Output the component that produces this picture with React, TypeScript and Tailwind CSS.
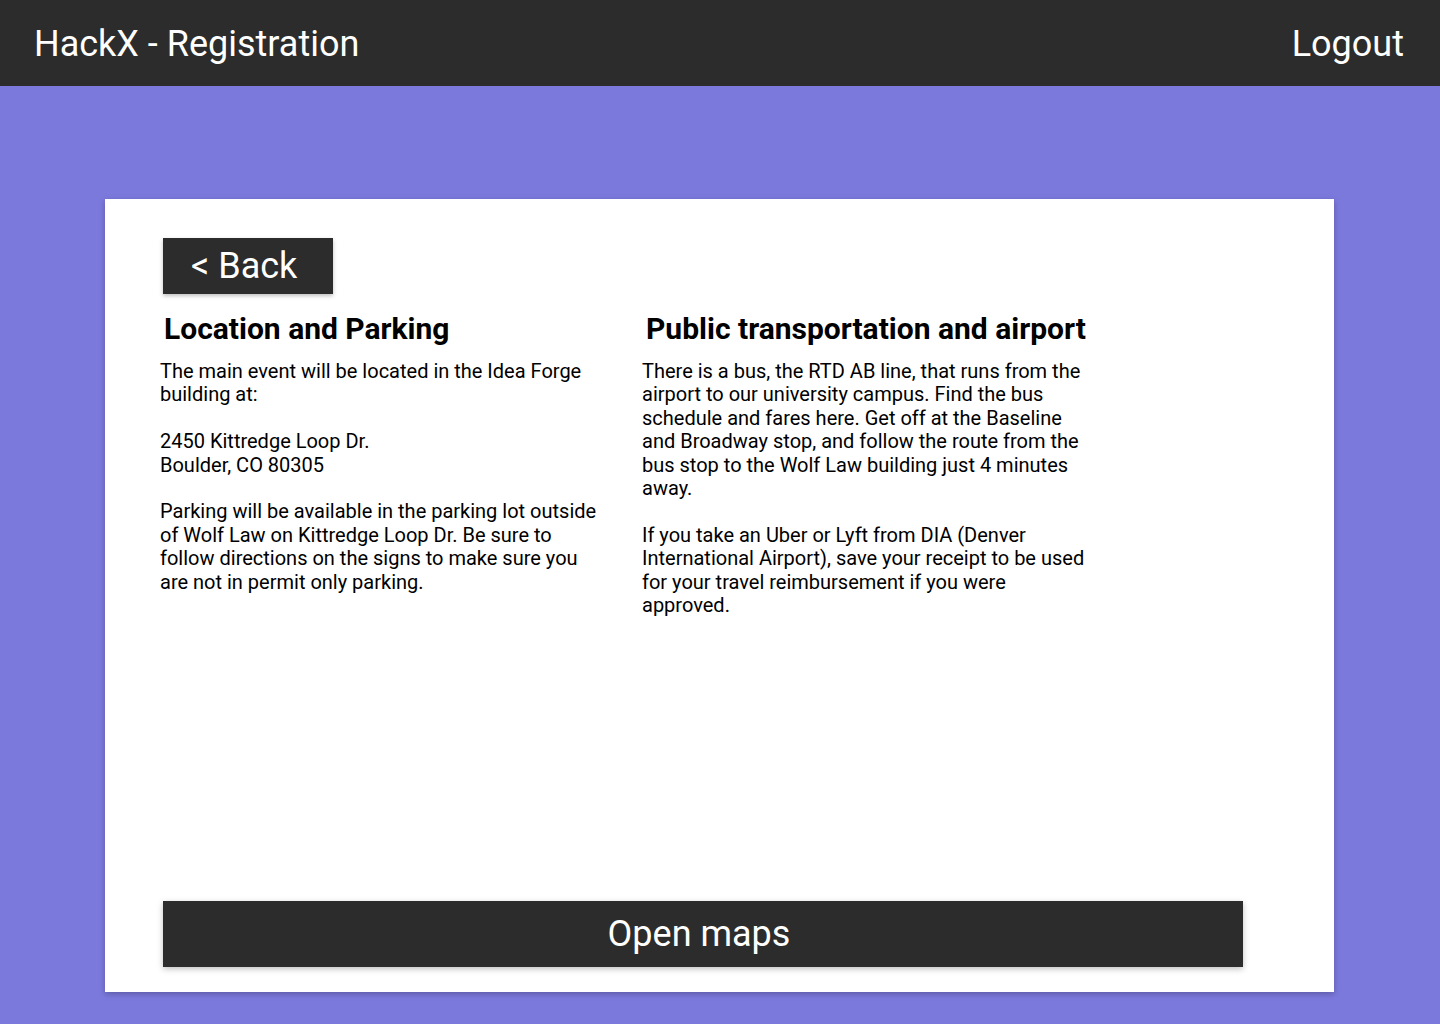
export default function App() {
  return (
    <div className="min-h-[1024px] bg-[#7b79dc] font-['Roboto',sans-serif]">
      <header className="flex h-[86px] items-center justify-between bg-[#2c2c2c] pl-[34px] pr-[36px] pt-[2px] text-white">
        <span className="text-[36px] leading-none">HackX - Registration</span>
        <span className="text-[36px] leading-none">Logout</span>
      </header>

      <main className="pl-[105px] pt-[113px]">
        <div className="flex h-[793px] w-[1229px] flex-col bg-white pb-[25px] pl-[58px] pr-[91px] pt-[39px] shadow-[0_2px_6px_rgba(0,0,0,0.25)]">
          <button className="flex h-[56px] w-[170px] items-center bg-[#2c2c2c] pl-[28px] text-[36px] leading-none text-white shadow-[0_2px_4px_rgba(0,0,0,0.25)]">
            &lt; Back
          </button>

          <div className="ml-[-3px] mt-[17px] flex gap-[36px] text-black">
            <section className="w-[446px]">
              <h2 className="whitespace-nowrap pl-[4px] text-[30px] font-bold leading-[35px]">Location and Parking</h2>
              <div className="mt-[14px] text-[20px] leading-[23.4px]">
                <p>The main event will be located in the Idea Forge building at:</p>
                <p className="mt-[23.4px]">
                  2450 Kittredge Loop Dr.
                  <br />
                  Boulder, CO 80305
                </p>
                <p className="mt-[23.4px]">
                  Parking will be available in the parking lot outside of Wolf Law on Kittredge Loop Dr. Be sure to
                  follow directions on the signs to make sure you are not in permit only parking.
                </p>
              </div>
            </section>

            <section className="w-[446px]">
              <h2 className="whitespace-nowrap pl-[4px] text-[30px] font-bold leading-[35px]">Public transportation and airport</h2>
              <div className="mt-[14px] text-[20px] leading-[23.4px]">
                <p>
                  There is a bus, the RTD AB line, that runs from the airport to our university campus. Find the bus
                  schedule and fares here. Get off at the Baseline and Broadway stop, and follow the route from the
                  bus stop to the Wolf Law building just 4 minutes away.
                </p>
                <p className="mt-[23.4px]">
                  If you take an Uber or Lyft from DIA (Denver International Airport), save your receipt to be used
                  for your travel reimbursement if you were approved.
                </p>
              </div>
            </section>
          </div>

          <div className="flex-1" />

          <button className="flex h-[66px] w-[1080px] items-center justify-center bg-[#2c2c2c] pr-[8px] text-[36px] leading-none text-white shadow-[0_2px_6px_rgba(0,0,0,0.25)]">
            Open maps
          </button>
        </div>
      </main>
    </div>
  );
}
